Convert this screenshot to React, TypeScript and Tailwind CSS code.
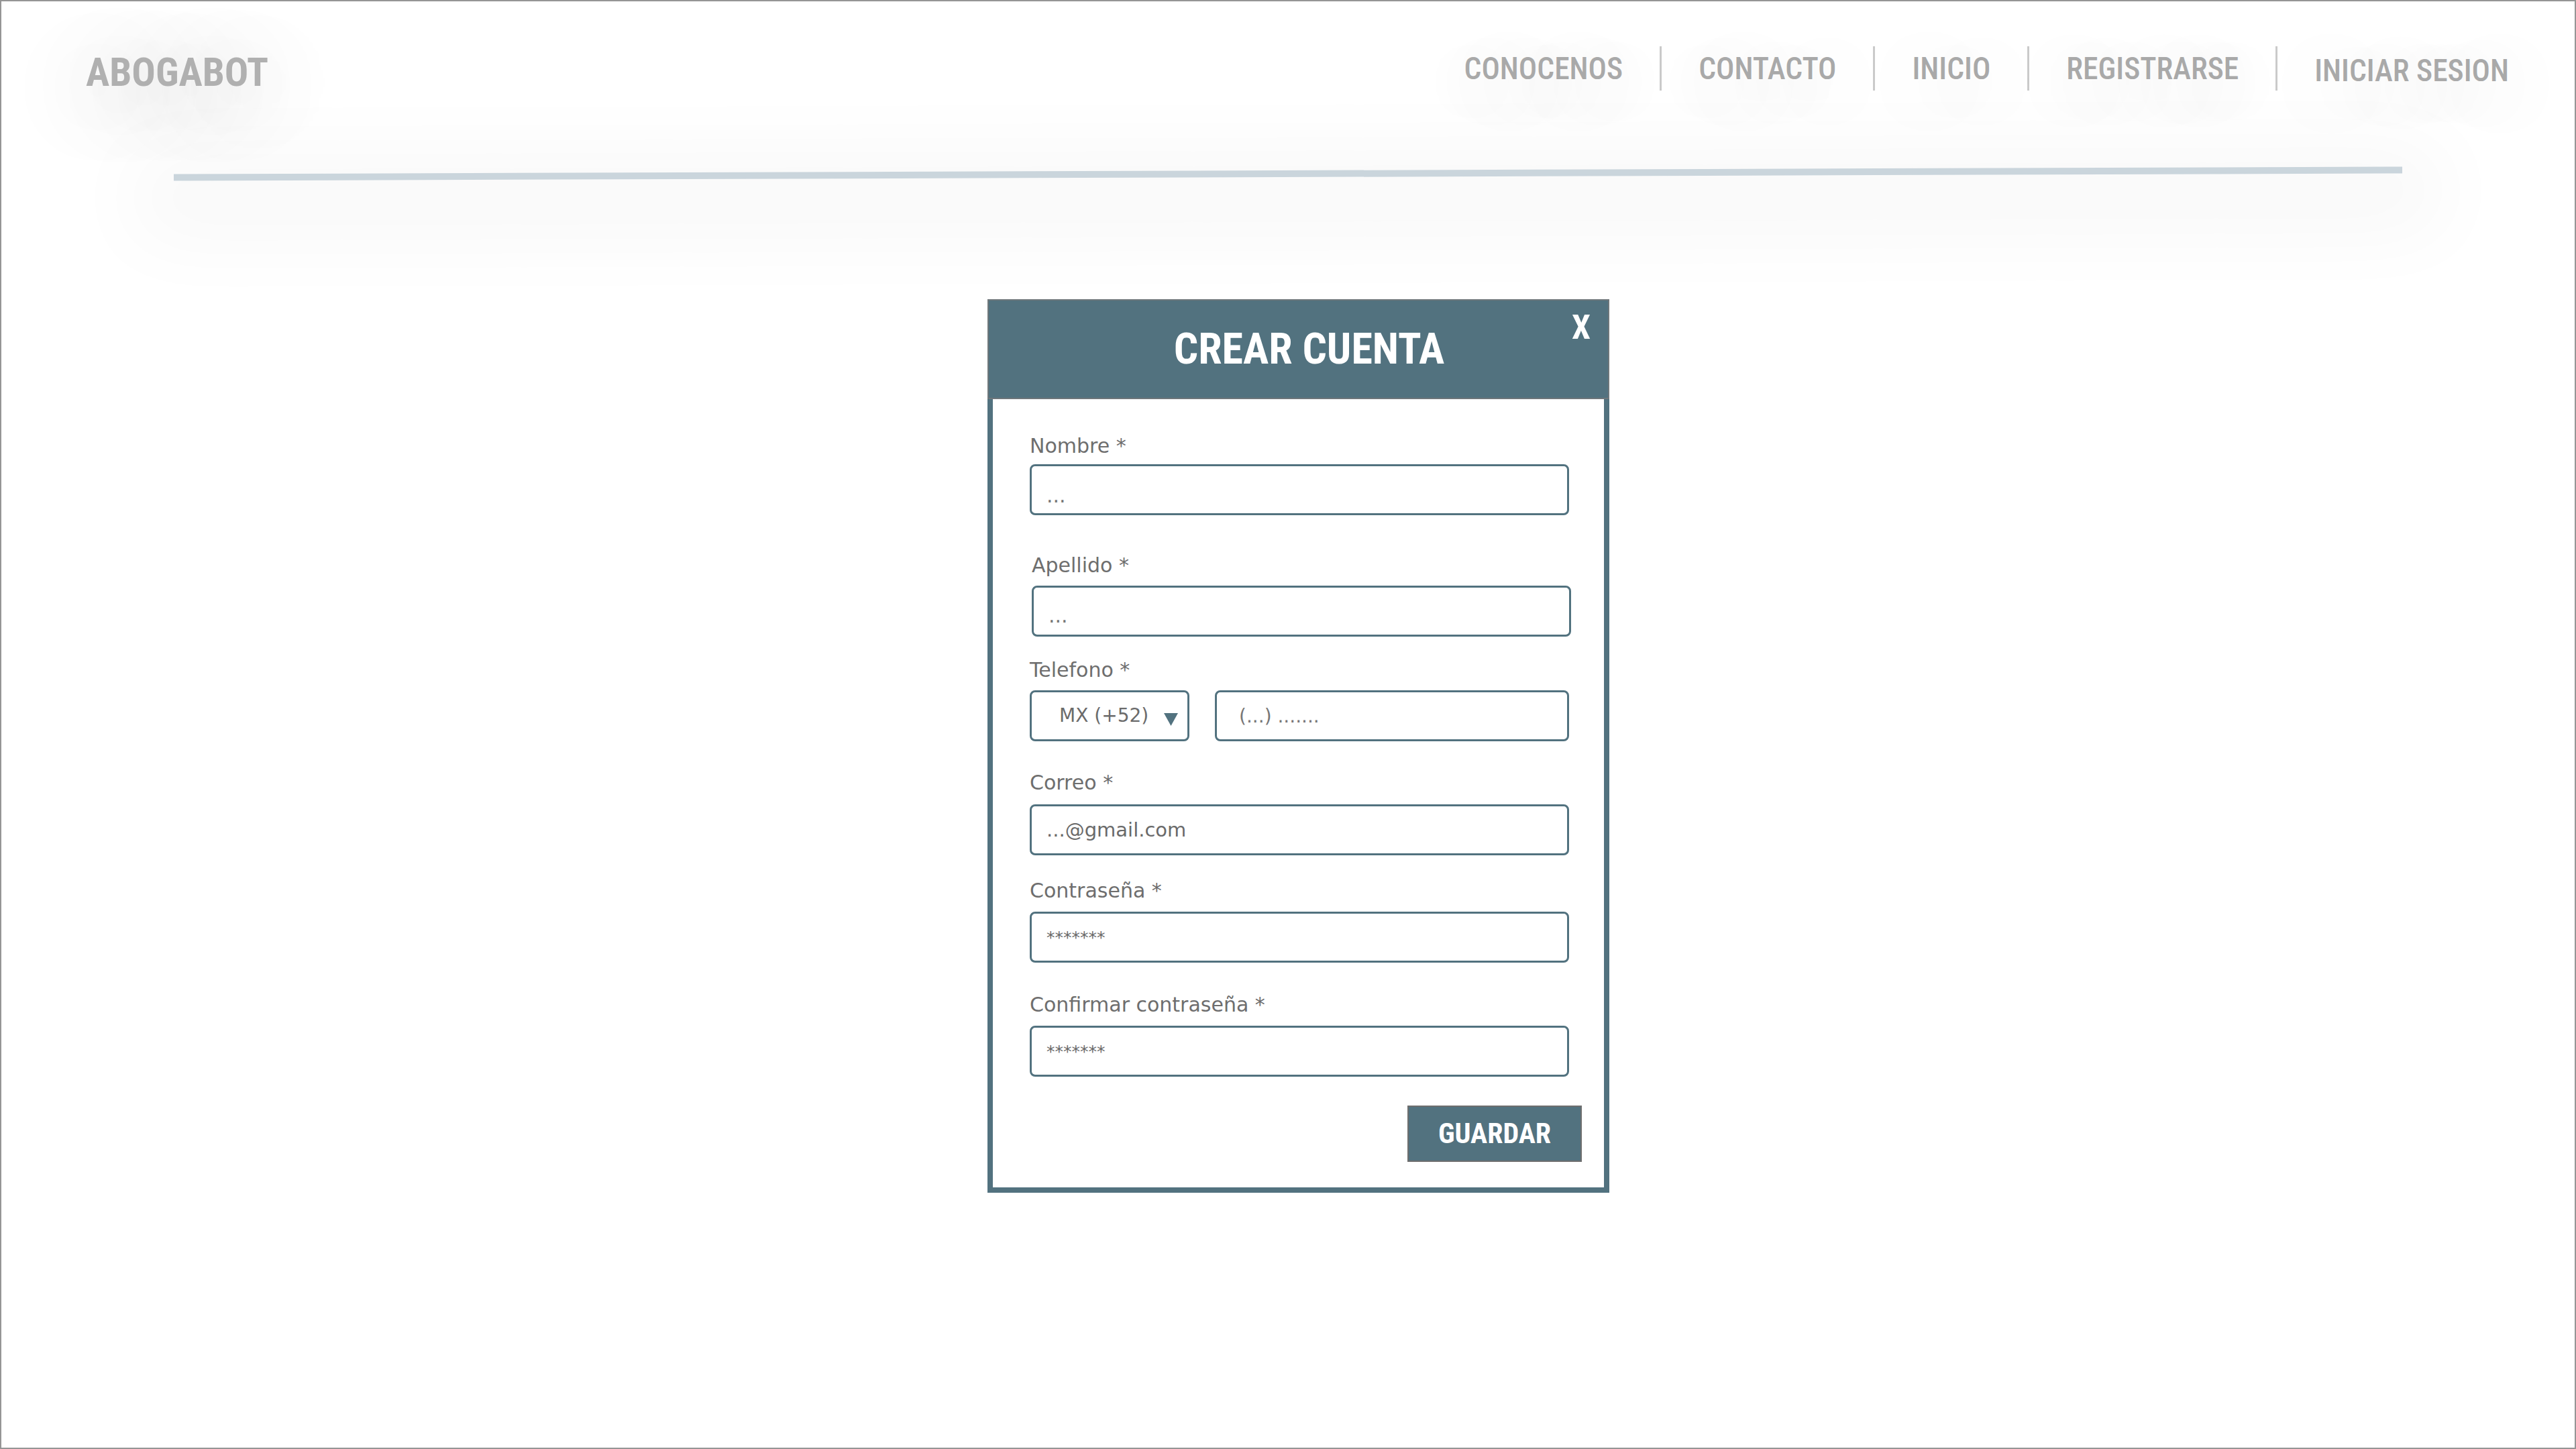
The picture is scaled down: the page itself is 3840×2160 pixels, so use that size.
import React from 'react';

const HEAD =
  "font-['Roboto_Condensed','Open_Sans','Liberation_Sans_Narrow',sans-serif] [font-stretch:75%]";
const BODY = "font-['DejaVu_Sans','Verdana',sans-serif]";

const navItems = ['CONOCENOS', 'CONTACTO', 'INICIO', 'REGISTRARSE', 'INICIAR SESION'];

const inputBox =
  "block w-full h-[76px] rounded-lg border-[3px] border-[#52727f] bg-white outline-none font-['DejaVu_Sans','Verdana',sans-serif]";

function Label({ text, className }: { text: string; className: string }) {
  return (
    <label className={`block h-[30px] text-[30px] leading-[30px] text-[#6e6e6e] ${BODY} ${className}`}>
      {text}
    </label>
  );
}

const App: React.FC = () => {
  return (
    <div className="h-screen w-full overflow-hidden border-2 border-[#959595] bg-white">
      {/* Header */}
      <header className="flex items-start justify-between">
        <div
          className={`ml-[126px] mt-[77px] text-[59px] leading-[58px] font-bold text-[#b0b0b0] ${HEAD} [text-shadow:0_20px_120px_rgba(0,0,0,0.35)]`}
        >
          ABOGABOT
        </div>
        <nav className="mr-[98px] mt-[67px] flex items-center">
          {navItems.map((item, index) => (
            <div
              key={item}
              className={`flex h-[66px] items-center ${
                index === 0 ? 'pr-[55px]' : index === navItems.length - 1 ? 'border-l-[3px] border-[#cacaca] pl-[55px]' : 'border-l-[3px] border-[#cacaca] px-[55px]'
              }`}
            >
              <span
                className={`text-[45.5px] leading-[47px] font-medium text-[#a9a9a9] ${HEAD} [text-shadow:0_20px_120px_rgba(0,0,0,0.3)] ${
                  index === navItems.length - 1 ? 'pt-[6px]' : ''
                }`}
              >
                {item}
              </span>
            </div>
          ))}
        </nav>
      </header>

      {/* Divider */}
      <div className="ml-[257px] mt-[117px] h-[10px] w-[3322px] -rotate-[0.19deg] bg-[#cad5dc] shadow-[0_30px_120px_60px_rgba(0,0,0,0.03)]" />

      {/* Modal */}
      <div className="relative ml-[1470px] mt-[182px] w-[927px]">
        <div className="flex h-[149px] items-center justify-center border-2 border-[#6f777b] bg-[#52727f] pl-[32px]">
          <h1 className={`text-[64px] leading-[64px] font-bold text-white ${HEAD}`}>CREAR CUENTA</h1>
        </div>
        <button className={`absolute right-[28px] top-[17px] text-[50px] leading-[50px] font-bold text-white ${HEAD}`}>
          X
        </button>

        <div className="border-x-8 border-b-8 border-[#52727f] bg-white pl-[55px] pt-[55px] pb-[38px]">
          <div className="w-[804px]">
            <Label text="Nombre *" className="mb-[12px]" />
            <input
              readOnly
              value="..."
              className={`${inputBox} pl-[22px] pt-[16px] text-[30px] text-[#777777]`}
            />

            <Label text="Apellido *" className="mt-[60px] mb-[15px] ml-[3px]" />
            <input
              readOnly
              value="..."
              className={`${inputBox} ml-[3px] pl-[22px] pt-[12px] text-[30px] text-[#777777]`}
            />

            <Label text="Telefono *" className="mt-[35px] mb-[15px]" />
            <div className="flex gap-[38px]">
              <div className="flex h-[76px] w-[238px] shrink-0 items-center rounded-lg border-[3px] border-[#52727f] pl-[41px]">
                <span className={`text-[28px] text-[#6b6b6b] ${BODY}`}>MX (+52)</span>
                <svg className="ml-auto mr-[14px] mt-[10px]" width="21" height="19" viewBox="0 0 21 19">
                  <path d="M0 0H21L10.5 19Z" fill="#52727f" />
                </svg>
              </div>
              <input
                readOnly
                value="(...) ......."
                className={`${inputBox} pl-[33px] text-[28px] text-[#777777]`}
              />
            </div>

            <Label text="Correo *" className="mt-[47px] mb-[17px]" />
            <input
              readOnly
              value="...@gmail.com"
              className={`${inputBox} pl-[22px] text-[29px] text-[#6a6a6a]`}
            />

            <Label text="Contraseña *" className="mt-[38px] mb-[16px]" />
            <input
              readOnly
              value="*******"
              className={`${inputBox} pl-[22px] text-[25px] text-[#6a6a6a]`}
            />

            <Label text="Confirmar contraseña *" className="mt-[48px] mb-[16px]" />
            <input
              readOnly
              value="*******"
              className={`${inputBox} pl-[22px] text-[25px] text-[#6a6a6a]`}
            />

            <div className="mt-[43px] -mr-[19px] flex justify-end">
              <button
                className={`h-[84px] w-[260px] border-2 border-[#6e6e6e] bg-[#52727f] text-[42px] leading-none font-bold text-white ${HEAD}`}
              >
                GUARDAR
              </button>
            </div>
          </div>
        </div>
      </div>
    </div>
  );
};

export default App;
